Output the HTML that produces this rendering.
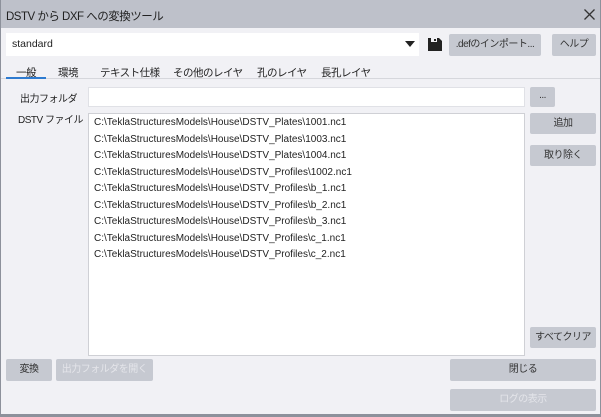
<!DOCTYPE html>
<html><head><meta charset="utf-8"><style>
*{margin:0;padding:0;box-sizing:border-box}
body{width:601px;height:417px;background:#8d919b;font-family:"Liberation Sans","Noto Sans CJK JP",sans-serif;font-size:10.5px;color:#222;position:relative;overflow:hidden}
.win{position:absolute;left:1px;top:0;width:599px;height:414px;background:#f1f1f5}
.title{position:absolute;left:0;top:0;width:599px;height:28px;background:#bec1ca}
.a{position:absolute;white-space:nowrap}
.btn{position:absolute;background:#c6c9d1;border-radius:2px;text-align:center;color:#333;font-size:10px;white-space:nowrap;letter-spacing:-0.5px;overflow:hidden}
.dis{color:#e4e5ea}
.white{position:absolute;background:#fff;border:1px solid #e0e1e6}
.li{position:absolute;left:93px;font-size:10px;color:#222;white-space:nowrap}
.tab{position:absolute;top:65px;font-size:10.5px;letter-spacing:-0.5px;white-space:nowrap}
</style></head><body>
<div class="win">
<div class="title"></div>
<div class="a" style="left:5px;top:8px;font-size:11.5px;letter-spacing:-0.5px">DSTV から DXF への変換ツール</div>
<svg class="a" style="left:583px;top:9px" width="11" height="11" viewBox="0 0 11 11"><path d="M0.5 0.5L10.5 10.5M10.5 0.5L0.5 10.5" stroke="#333" stroke-width="1.3"/></svg>
<div class="white" style="left:5px;top:33px;width:413px;height:23px;border:none"></div>
<div class="a" style="left:11px;top:38px;font-size:10.5px">standard</div>
<div class="a" style="left:404px;top:41px;width:0;height:0;border-left:5px solid transparent;border-right:5px solid transparent;border-top:6px solid #222"></div>
<svg class="a" style="left:427px;top:38px" width="14" height="13" viewBox="0 0 14 13"><path d="M0 0H11L14 3V13H0Z" fill="#222"/><rect x="3" y="0" width="6" height="4" fill="#f1f1f5"/><rect x="6" y="1" width="2" height="2" fill="#222"/></svg>
<div class="btn" style="left:448px;top:34px;width:92px;height:22px;line-height:22px">.defのインポート...</div>
<div class="btn" style="left:551px;top:34px;width:44px;height:22px;line-height:22px">ヘルプ</div>
<div class="tab" style="left:15px">一般</div>
<div class="tab" style="left:57px">環境</div>
<div class="tab" style="left:99px">テキスト仕様</div>
<div class="tab" style="left:172px">その他のレイヤ</div>
<div class="tab" style="left:256px">孔のレイヤ</div>
<div class="tab" style="left:320px">長孔レイヤ</div>
<div class="a" style="left:0;top:78px;width:599px;height:1px;background:#d6d7dc"></div>
<div class="a" style="left:5px;top:77px;width:40px;height:2px;background:#2e7bd0"></div>
<div class="a" style="left:19px;top:90px;font-size:10px;letter-spacing:-0.5px">出力フォルダ</div>
<div class="white" style="left:87px;top:87px;width:437px;height:20px"></div>
<div class="btn" style="left:529px;top:87px;width:25px;height:20px;line-height:18px">...</div>
<div class="a" style="left:17px;top:111px;font-size:10px;letter-spacing:-0.5px">DSTV ファイル</div>
<div class="white" style="left:87px;top:113px;width:437px;height:243px;border-color:#cfd0d5"></div>
<div class="li" style="top:117px">C:\TeklaStructuresModels\House\DSTV_Plates\1001.nc1</div>
<div class="li" style="top:134px">C:\TeklaStructuresModels\House\DSTV_Plates\1003.nc1</div>
<div class="li" style="top:150px">C:\TeklaStructuresModels\House\DSTV_Plates\1004.nc1</div>
<div class="li" style="top:167px">C:\TeklaStructuresModels\House\DSTV_Profiles\1002.nc1</div>
<div class="li" style="top:183px">C:\TeklaStructuresModels\House\DSTV_Profiles\b_1.nc1</div>
<div class="li" style="top:200px">C:\TeklaStructuresModels\House\DSTV_Profiles\b_2.nc1</div>
<div class="li" style="top:216px">C:\TeklaStructuresModels\House\DSTV_Profiles\b_3.nc1</div>
<div class="li" style="top:233px">C:\TeklaStructuresModels\House\DSTV_Profiles\c_1.nc1</div>
<div class="li" style="top:249px">C:\TeklaStructuresModels\House\DSTV_Profiles\c_2.nc1</div>
<div class="btn" style="left:529px;top:113px;width:66px;height:21px;line-height:21px">追加</div>
<div class="btn" style="left:529px;top:145px;width:66px;height:21px;line-height:21px">取り除く</div>
<div class="btn" style="left:529px;top:327px;width:66px;height:21px;line-height:21px">すべてクリア</div>
<div class="btn" style="left:5px;top:359px;width:46px;height:22px;line-height:22px">変換</div>
<div class="btn dis" style="left:55px;top:359px;width:97px;height:22px;line-height:22px">出力フォルダを開く</div>
<div class="btn" style="left:449px;top:359px;width:146px;height:22px;line-height:22px">閉じる</div>
<div class="btn dis" style="left:449px;top:389px;width:146px;height:22px;line-height:22px">ログの表示</div>
</div>
</body></html>
